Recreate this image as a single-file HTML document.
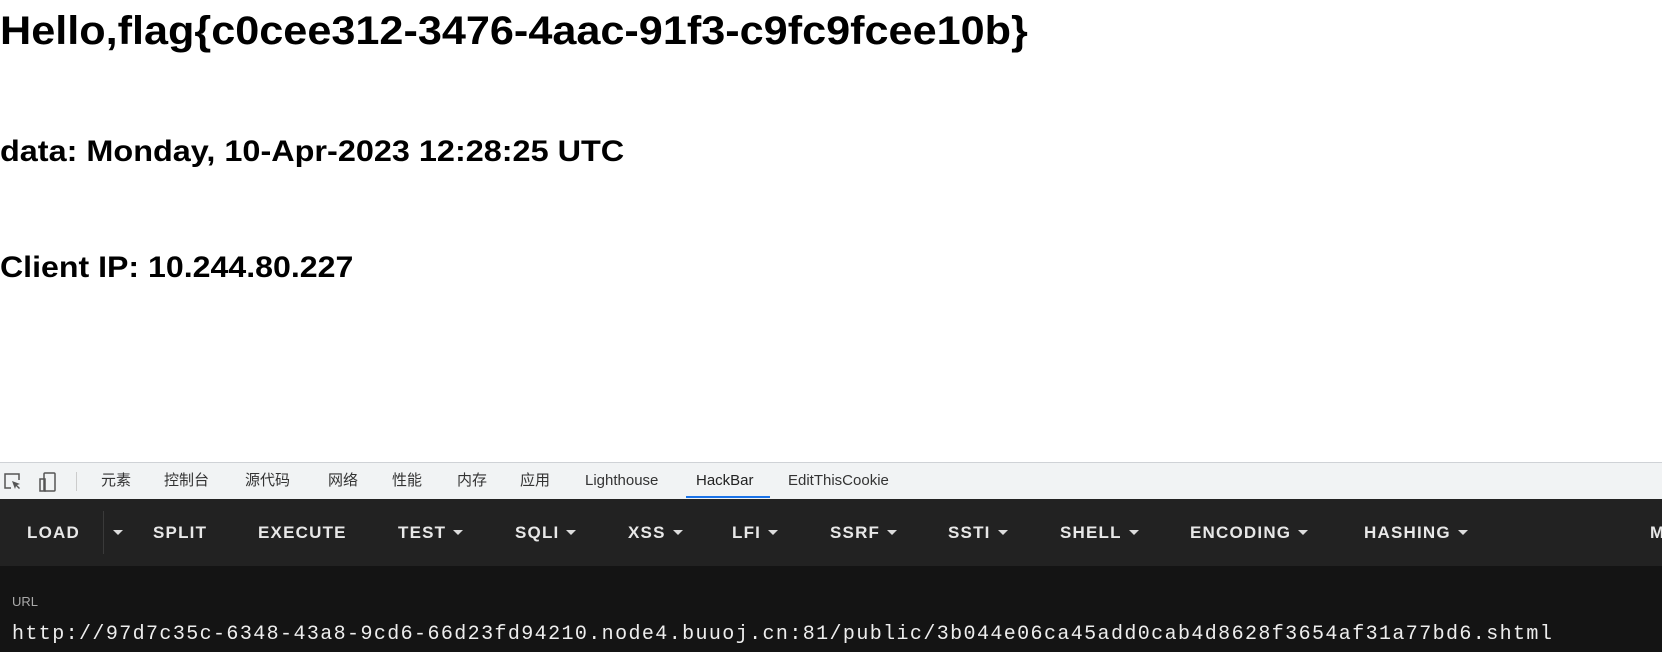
<!DOCTYPE html>
<html><head><meta charset="utf-8"><style>
html,body{margin:0;padding:0;width:1662px;height:652px;overflow:hidden;background:#fff;font-family:"Liberation Sans","Noto Sans CJK SC",sans-serif;}
.t{position:absolute;white-space:nowrap;transform-origin:left center;}
h1,h2{margin:0;font-weight:bold;color:#000;}
#dev{position:absolute;left:0;top:462px;width:1662px;height:190px;}
#tabs{position:absolute;left:0;top:0;width:1662px;height:36px;background:#f1f3f4;border-top:1px solid #cfd2d6;border-bottom:1px solid #cfd2d6;}
#tabs .t{top:0;line-height:36px;font-size:15px;color:#333;}
#bar{position:absolute;left:0;top:37px;width:1662px;height:67px;background:#222;}
#bar .t{top:0;line-height:67px;font-size:17px;font-weight:bold;color:#e8e8e8;letter-spacing:1.2px;}
.ar{display:inline-block;width:0;height:0;border-left:5px solid transparent;border-right:5px solid transparent;border-top:5px solid #ddd;vertical-align:middle;margin-left:7px;margin-bottom:3px;}
#body{position:absolute;left:0;top:104px;width:1662px;height:86px;background:#141414;}
</style></head><body>
<h1 class="t" style="left:0;top:8px;font-size:40px;line-height:46px;transform:scaleX(1.08)">Hello,flag{c0cee312-3476-4aac-91f3-c9fc9fcee10b}</h1>
<h2 class="t" style="left:0;top:134px;font-size:30px;line-height:36px;transform:scaleX(1.08)">data: Monday, 10-Apr-2023 12:28:25 UTC</h2>
<h2 class="t" style="left:0;top:250px;font-size:30px;line-height:36px;transform:scaleX(1.07)">Client IP: 10.244.80.227</h2>
<div id="dev">
 <div id="tabs">
  <svg style="position:absolute;left:3px;top:9px" width="20" height="20" viewBox="0 0 20 20"><path d="M8 16H2V2h14v6" fill="none" stroke="#555" stroke-width="1.5"/><path d="M9 9l8 3-3 1 3 3-1 1-3-3-1 3z" fill="#555"/></svg>
  <svg style="position:absolute;left:38px;top:8px" width="22" height="22" viewBox="0 0 22 22"><rect x="6" y="2" width="11" height="18" rx="1" fill="none" stroke="#555" stroke-width="1.5"/><rect x="2" y="8" width="5" height="12" fill="none" stroke="#555" stroke-width="1.5"/></svg>
  <div style="position:absolute;left:76px;top:9px;width:1px;height:19px;background:#ccc"></div>
  <span class="t" style="left:101px">元素</span>
  <span class="t" style="left:164px">控制台</span>
  <span class="t" style="left:245px">源代码</span>
  <span class="t" style="left:328px">网络</span>
  <span class="t" style="left:392px">性能</span>
  <span class="t" style="left:457px">内存</span>
  <span class="t" style="left:520px">应用</span>
  <span class="t" style="left:585px">Lighthouse</span>
  <span class="t" style="left:696px;color:#222">HackBar</span>
  <div style="position:absolute;left:686px;top:33px;width:84px;height:2px;background:#1a73e8"></div>
  <span class="t" style="left:788px">EditThisCookie</span>
 </div>
 <div id="bar">
  <span class="t" style="left:27px">LOAD</span>
  <div style="position:absolute;left:103px;top:12px;width:1px;height:43px;background:#3a3a3a"></div>
  <span class="t" style="left:106px"><i class="ar"></i></span>
  <span class="t" style="left:153px">SPLIT</span>
  <span class="t" style="left:258px">EXECUTE</span>
  <span class="t" style="left:398px">TEST<i class="ar"></i></span>
  <span class="t" style="left:515px">SQLI<i class="ar"></i></span>
  <span class="t" style="left:628px">XSS<i class="ar"></i></span>
  <span class="t" style="left:732px">LFI<i class="ar"></i></span>
  <span class="t" style="left:830px">SSRF<i class="ar"></i></span>
  <span class="t" style="left:948px">SSTI<i class="ar"></i></span>
  <span class="t" style="left:1060px">SHELL<i class="ar"></i></span>
  <span class="t" style="left:1190px">ENCODING<i class="ar"></i></span>
  <span class="t" style="left:1364px">HASHING<i class="ar"></i></span>
  <span class="t" style="left:1650px">M</span>
 </div>
 <div id="body">
  <span class="t" style="left:12px;top:28px;font-size:13px;color:#aaa;line-height:16px">URL</span>
  <span class="t" style="left:12px;top:57px;font-family:'Liberation Mono',monospace;font-size:20px;line-height:24px;letter-spacing:1.4px;color:#eee">http://97d7c35c-6348-43a8-9cd6-66d23fd94210.node4.buuoj.cn:81/public/3b044e06ca45add0cab4d8628f3654af31a77bd6.shtml</span>
 </div>
</div>
</body></html>
